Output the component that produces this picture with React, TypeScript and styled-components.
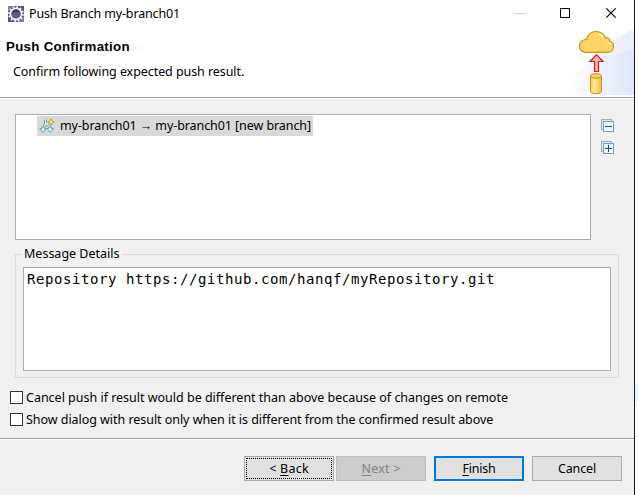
import React from 'react';
import styled, { createGlobalStyle } from 'styled-components';

const GlobalStyle = createGlobalStyle`
  * { box-sizing: border-box; }
  body { margin: 0; overflow: hidden; background: #fff; }
`;

const Desktop = styled.div`
  width: 638px;
  height: 495px;
  overflow: hidden;
  background: linear-gradient(#fff 0 384px, #e8f1fc 384px 402px, #fff 402px);
  font: 12.5px/18px "Noto Sans", "Open Sans", sans-serif;
  color: #000;
`;
const Window = styled.div`
  width: 635px;
  height: 495px;
  border-right: 1px solid #1c1c1c;
  background: #f0f0f0;
  display: flex;
  flex-direction: column;
`;
const Header = styled.header`
  height: 98px;
  flex: none;
  display: flex;
  flex-direction: column;
  background: #fff;
  border-bottom: 1px solid #a0a0a0;
`;
const TitleBar = styled.div`
  display: flex;
  align-items: center;
  height: 28px;
  flex: none;
  padding-left: 8px;
  svg { display: block; flex: none; }
`;
const Text = styled.span<{ $ls?: number }>`
  white-space: pre;
  letter-spacing: ${p => p.$ls ?? 0}px;
`;
const TitleText = styled(Text)`
  margin-left: 5px;
  flex: 1;
`;
const Banner = styled.div`
  display: flex;
  flex: 1;
`;
const BannerText = styled.div`
  flex: 1;
  display: flex;
  flex-direction: column;
  padding: 10px 0 0 6px;
`;
const Heading = styled.h1`
  margin: 0;
  font: bold 13.3px/18px "Liberation Sans", Arial, sans-serif;
  letter-spacing: 0.29px;
`;
const Subtitle = styled.div`
  padding: 7px 0 0 7px;
`;
const Body = styled.main`
  flex: none;
  height: 341px;
  padding: 15px 15px 0;
  border-top: 1px solid #fff;
  border-bottom: 1px solid #a0a0a0;
`;
const TreeRow = styled.div`
  display: flex;
`;
const Tree = styled.div`
  width: 576px;
  height: 126px;
  border: 1px solid #abadb3;
  background: #fff;
  padding: 1px 0 0 21px;
`;
const TreeItem = styled.div`
  display: flex;
  align-items: center;
  width: 276px;
  height: 20px;
  background: #d9d9d9;
  padding-left: 2px;
  svg { flex: none; }
`;
const BranchName = styled(Text)`
  margin-left: 5px;
`;
const TreeTools = styled.div`
  display: flex;
  flex-direction: column;
  gap: 9px;
  padding: 5px 0 0 10px;
  svg { display: block; }
`;
const Group = styled.fieldset`
  margin: 5px 0 0;
  padding: 0;
  width: 604px;
  height: 133px;
  border: 1px solid #dcdcdc;
`;
const Legend = styled.legend`
  margin-left: 6px;
  padding: 0 2px;
  height: 18px;
`;
const Message = styled.div`
  margin: 4px 0 0 7px;
  width: 588px;
  height: 104px;
  padding: 2px 3px;
  border: 1px solid #abadb3;
  background: #fff;
  font: 14px/18px "DejaVu Sans Mono", monospace;
`;
const Options = styled.div`
  display: flex;
  flex-direction: column;
  gap: 4px;
  margin: 10px 0 0 -5px;
`;
const Option = styled.label`
  display: flex;
  align-items: center;
  gap: 3px;
  height: 18px;
`;
const OptionText = styled(Text)`
  padding-top: 2px;
`;
const CheckBox = styled.span`
  width: 13px;
  height: 13px;
  flex: none;
  border: 1px solid #333;
  background: #fff;
`;
const Footer = styled.footer`
  flex: 1;
  border-top: 1px solid #fff;
  display: flex;
  justify-content: flex-end;
  padding: 16px 12px 0 0;
`;
const Button = styled.button<{ $kind?: 'focus' | 'default' | 'disabled'; $gap?: number }>`
  display: flex;
  align-items: center;
  justify-content: center;
  width: 90px;
  height: 25px;
  margin: 0 0 0 ${p => p.$gap ?? 8}px;
  padding: 0;
  font: inherit;
  color: ${p => (p.$kind === 'disabled' ? '#838383' : '#000')};
  background: ${p => (p.$kind === 'disabled' ? '#ccc' : '#e1e1e1')};
  border: ${p => (p.$kind === 'default' ? '2px solid #0078d7' : `1px solid ${p.$kind === 'disabled' ? '#bfbfbf' : '#adadad'}`)};
  outline: ${p => (p.$kind === 'focus' ? '1px dotted #000' : 'none')};
  outline-offset: -3px;
`;
const Key = styled.span`
  text-decoration: underline;
  text-underline-offset: 2px;
  text-decoration-skip-ink: none;
`;

const GearIcon = () => (
  <svg width="16" height="16" viewBox="0 0 16 16">
    <defs>
      <linearGradient id="core" x2="0" y2="1">
        <stop offset="0" stopColor="#2c2255" />
        <stop offset="1" stopColor="#75679b" />
      </linearGradient>
    </defs>
    <rect width="16" height="16" fill="#60478c" />
    <path d="M0 0h5L0 6zM11 16h5v-6z" fill="#8b79a9" />
    <circle cx="8" cy="8" r="7" fill="none" stroke="#f3eee9" strokeWidth="1.8" strokeDasharray="1.9 1.765" />
    <circle cx="8" cy="8" r="5.6" fill="url(#core)" stroke="#f5f2ee" strokeWidth="1.8" />
    <path d="M3.800 7h8.400M3.800 9h8.400" stroke="#8880a8" strokeWidth=".6" />
  </svg>
);

const WindowControls = () => (
  <svg width="119" height="28" viewBox="515 0 119 28" fill="none" shapeRendering="crispEdges">
    <path d="M515 13.5h10" stroke="#ccc" />
    <rect x="560.5" y="8.5" width="9" height="9" stroke="#000" />
    <path d="M606.3 8.3l9.4 9.4M615.7 8.3l-9.4 9.4" stroke="#000" strokeWidth="1.2" shapeRendering="auto" />
  </svg>
);

const PushArt = () => (
  <svg width="74" height="69" viewBox="560 28 74 69">
    <defs>
      <linearGradient id="haze">
        <stop offset="0" stopColor="#fff" />
        <stop offset="1" stopColor="#e8eefb" />
      </linearGradient>
      <linearGradient id="haze2">
        <stop offset="0" stopColor="#f8faff" />
        <stop offset="1" stopColor="#dfe7f9" />
      </linearGradient>
      <linearGradient id="can">
        <stop offset="0" stopColor="#fbc94a" />
        <stop offset=".35" stopColor="#ffe79f" />
        <stop offset="1" stopColor="#f5bd35" />
      </linearGradient>
    </defs>
    <path d="M562 95C574 74 600 44 634 29V95Z" fill="url(#haze)" />
    <path d="M577 95C584 75 603 54 634 50V95Z" fill="url(#haze2)" />
    <path d="M586 52.4C582 52.4 579.5 49.5 579.5 46C579.5 42 582.5 39.3 586.5 39.5C587 34.500 591.500 31.500 596 31.500C601 31.500 604.500 34.500 605.500 38C608 37 610 39 609.500 41C612.500 41.500 613.500 44 613.500 46.500C613.500 50 611 52.400 607.500 52.400Z" fill="#ffd466" stroke="#cb9520" strokeWidth="1.2" />
    <path d="M599 34l4 2.500M608 42.800l2.500 1" stroke="#fff1c5" strokeWidth="1.800" strokeLinecap="round" />
    <path d="M596.500 54.700L603 61.500H598.500V71.500H594.500V61.500H590Z" fill="#f8b4b4" stroke="#d91c1c" strokeWidth="1.2" />
    <path d="M590.500 76V91.500C591 94.300 601 94.300 601.500 91.500V76Z" fill="url(#can)" stroke="#cb9520" />
    <ellipse cx="596" cy="75.900" rx="5.500" ry="2.300" fill="#f7cf66" stroke="#cb9520" />
  </svg>
);

const BranchIcon = () => (
  <svg width="16" height="16" viewBox="0 0 16 16">
    <path d="M7.500 1.500v3M5.500 2v3.500C5.500 7 3.500 7.500 3.500 10.500M9.500 6c0 1.500 2 2 2 4.500M6 8h3" fill="none" stroke="#5f9ba5" strokeWidth="1" />
    <path d="M6.500 2.500v4L4.500 9.500M8.500 6.500l2 3" fill="none" stroke="#dff3f3" strokeWidth="1" />
    <path d="M.700 10.500h2V9h3v1.500h1.500L4 14.500zM8 10.500h1.500V9h3v1.500h2L11.300 14.500z" fill="#d9f5f6" stroke="#5f9ba5" strokeWidth=".9" />
    <path d="M12 .300l1.500 2.200L15.700 4l-2.200 1.500L12 7.700l-1.500-2.200L8.300 4l2.200-1.500z" fill="#c59618" />
    <path d="M12 2v4M10 4h4" stroke="#fff1a8" />
  </svg>
);

const StackIcon = ({ plus = false }: { plus?: boolean }) => (
  <svg width="13" height="13" viewBox="0 0 13 13" shapeRendering="crispEdges">
    <rect x=".5" y=".5" width="10" height="10" fill="#dce8f5" stroke="#9db0cb" />
    <rect x="2.500" y="2.500" width="10" height="10" fill="#f2f9ff" stroke="#7e99bd" />
    <path d={plus ? 'M4 7.500h7M7.500 4v7' : 'M4 7.500h7'} stroke="#074a84" />
  </svg>
);

export default function App() {
  return (
    <Desktop>
      <GlobalStyle />
      <Window>
        <Header>
          <TitleBar>
            <GearIcon />
            <TitleText $ls={-0.15}>Push Branch my-branch01</TitleText>
            <WindowControls />
          </TitleBar>
          <Banner>
            <BannerText>
              <Heading>Push Confirmation</Heading>
              <Subtitle><Text $ls={-0.07}>Confirm following expected push result.</Text></Subtitle>
            </BannerText>
            <PushArt />
          </Banner>
        </Header>
        <Body>
          <TreeRow>
            <Tree>
              <TreeItem>
                <BranchIcon />
                <BranchName $ls={-0.08}>my-branch01 → my-branch01 [new branch]</BranchName>
              </TreeItem>
            </Tree>
            <TreeTools>
              <StackIcon />
              <StackIcon plus />
            </TreeTools>
          </TreeRow>
          <Group>
            <Legend><Text>Message Details</Text></Legend>
            <Message><Text $ls={0.57}>Repository https://github.com/hanqf/myRepository.git</Text></Message>
          </Group>
          <Options>
            <Option><CheckBox /><OptionText $ls={-0.01}>Cancel push if result would be different than above because of changes on remote</OptionText></Option>
            <Option><CheckBox /><OptionText $ls={-0.045}>Show dialog with result only when it is different from the confirmed result above</OptionText></Option>
          </Options>
        </Body>
        <Footer>
          <Button $kind="focus"><Text $ls={0.25}>&lt; <Key>B</Key>ack</Text></Button>
          <Button $kind="disabled" $gap={2}><Text $ls={0.2}><Key>N</Key>ext &gt;</Text></Button>
          <Button $kind="default"><Text $ls={-0.2}><Key>F</Key>inish</Text></Button>
          <Button><Text $ls={-0.15}>Cancel</Text></Button>
        </Footer>
      </Window>
    </Desktop>
  );
}
